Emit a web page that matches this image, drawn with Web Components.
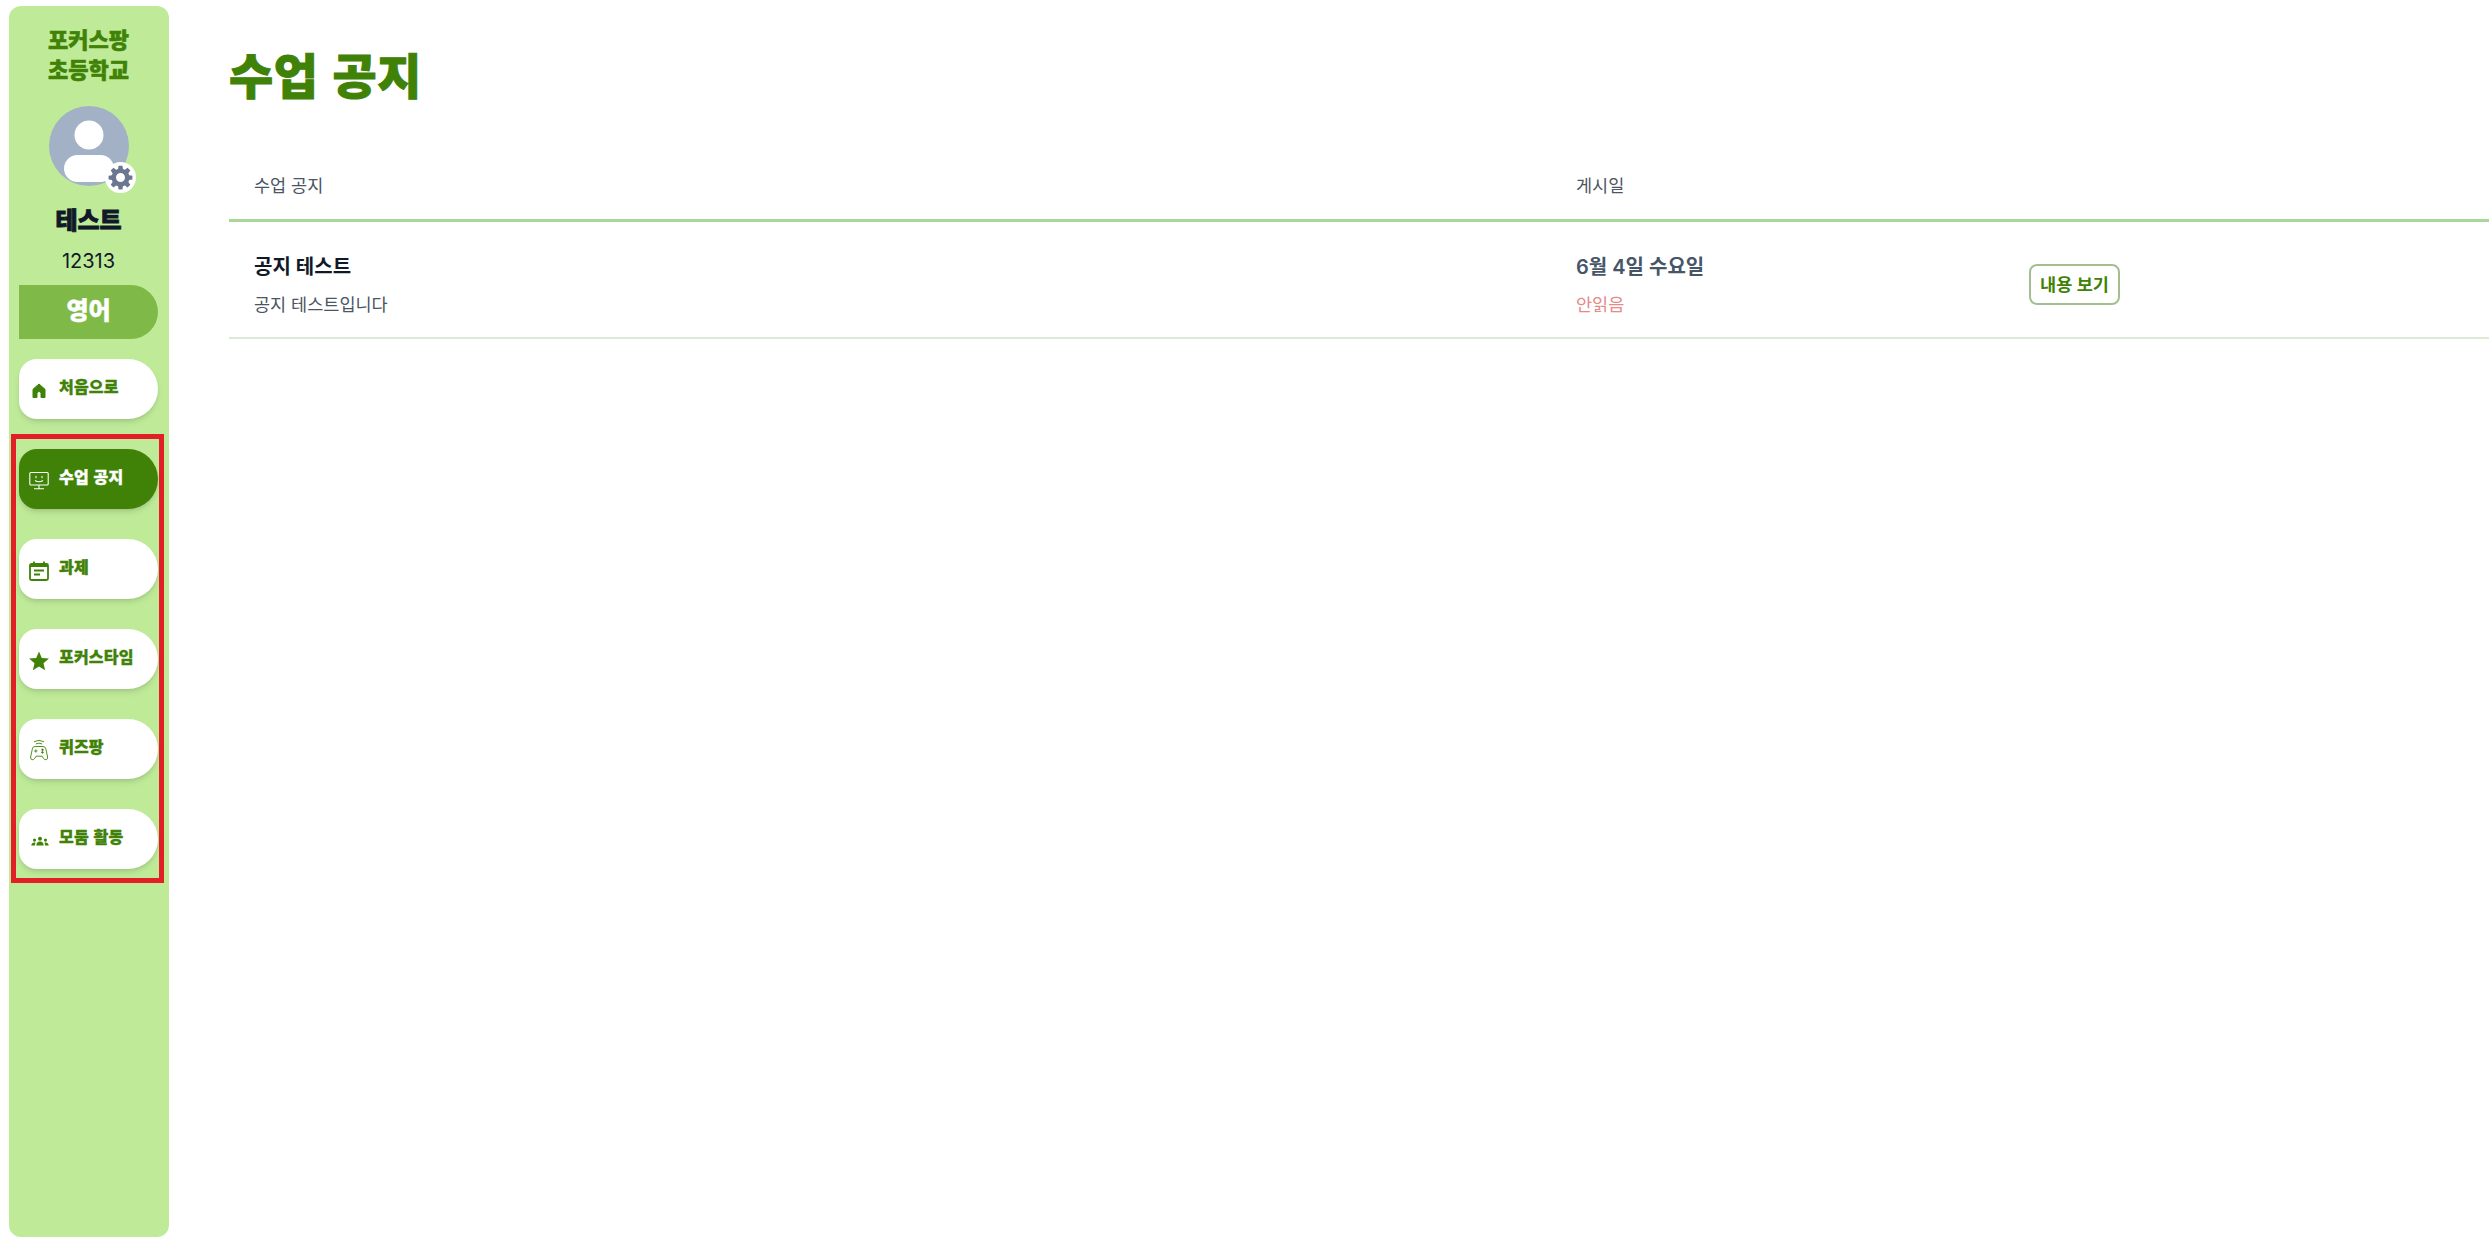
<!DOCTYPE html>
<html lang="ko">
<head>
<meta charset="utf-8">
<title>수업 공지</title>
<style>
  html, body { margin: 0; height: 100%; background: #fff; }
  body { font-family: Inter, "Noto Sans CJK KR", sans-serif; }
</style>
</head>
<body>
<app-shell>
  <school-sidebar slot="side" school="포커스팡 초등학교" name="테스트" code="12313" subject="영어">
    <nav-item slot="home" label="처음으로">
      <svg slot="icon" viewBox="0 0 24 24" width="24" height="24" style="margin:-1px -2px"><path fill="#3f8207" stroke="#3f8207" stroke-width="1" stroke-linejoin="round" d="M12 5 6 10.300V18.500H10v-4a2 2 0 0 1 4 0v4h4v-8.200z"/></svg>
    </nav-item>
    <nav-item label="수업 공지" active>
      <svg slot="icon" viewBox="0 0 20 20" width="20" height="20" fill="none" stroke="currentColor" stroke-width="1.100"><rect x=".8" y="1.500" width="18.400" height="12.500" rx="1"/><path d="M10 14v3.500M5 17.800h10M6 9.500q4 2.600 8 0"/><path d="M7 5.300v1.500M13 5.300v1.500" stroke-linecap="round"/></svg>
    </nav-item>
    <nav-item label="과제">
      <svg slot="icon" viewBox="0 0 20 20" width="20" height="20" fill="none" stroke="currentColor" stroke-width="1.800"><rect x="1" y="3" width="18" height="16" rx="1.500"/><path d="M5 .5v3M15 .5v3M1 5h18M5 9.500h10M5 13.500h6"/></svg>
    </nav-item>
    <nav-item label="포커스타임">
      <svg slot="icon" viewBox="0 0 20 20" width="20" height="20"><path fill="currentColor" d="m10 .5 2.800 6.500 7.100.6-5.400 4.700 1.600 7L10 15.600l-6.100 3.700 1.600-7L.1 7.600 7.200 7z"/></svg>
    </nav-item>
    <nav-item label="퀴즈팡">
      <svg slot="icon" viewBox="0 0 20 22" width="20" height="22" fill="none" stroke="currentColor" stroke-width=".9" style="margin-top:-2px"><path d="M5 2.800q5-3 10 0M6.800 5q3.200-1.800 6.400 0"/><path d="M6 7.500h8q2.300 0 2.800 2.300l1.800 8.200q.3 2.300-1.500 2.700-1.500.3-2.500-1.200l-1.500-2.300H7.100l-1.500 2.300q-1 1.500-2.500 1.200-1.800-.4-1.500-2.700l1.800-8.200Q3.700 7.500 6 7.500z"/><path d="M5.200 12h3.200M6.800 10.400v3.200"/><circle cx="13.500" cy="10.800" r=".8" fill="currentColor"/><circle cx="13.500" cy="13.400" r=".8" fill="currentColor"/></svg>
    </nav-item>
    <nav-item label="모둠 활동">
      <svg slot="icon" viewBox="0 0 24 24" width="22" height="22" fill="#3f8207"><circle cx="12" cy="9.500" r="2.200"/><circle cx="6" cy="11" r="1.700"/><circle cx="18" cy="11" r="1.700"/><path d="M8 17c0-3 1.600-4.500 4-4.500s4 1.500 4 4.500zM2.500 17c0-2 1.200-3.500 3.200-3.500.6 0 1.100.1 1.500.4C6.700 14.800 6.500 15.800 6.500 17zM21.500 17c0-2-1.200-3.500-3.200-3.500-.6 0-1.100.1-1.500.4.500.9.700 1.900.7 3.100z"/></svg>
    </nav-item>
  </school-sidebar>
  <notice-board heading="수업 공지" col-title="수업 공지" col-date="게시일">
    <notice-row title="공지 테스트" body="공지 테스트입니다" date="6월 4일 수요일" status="안읽음" action="내용 보기"></notice-row>
  </notice-board>
</app-shell>

<script>
class AppShell extends HTMLElement {
  constructor() {
    super();
    this.attachShadow({ mode: "open" });
    this.shadowRoot.innerHTML = `
    <style>
      :host { display: flex; height: 1250px; box-sizing: border-box; padding: 6px 3px 13px 9px; gap: 60px; }
      ::slotted(notice-board) { flex: 1; min-width: 0; }
    </style>
    <slot name="side"></slot>
    <slot></slot>`;
  }
}

class SchoolSidebar extends HTMLElement {
  constructor() {
    super();
    this.attachShadow({ mode: "open" });
  }
  connectedCallback() {
    const [a, b] = this.getAttribute("school").split(" ");
    this.shadowRoot.innerHTML = `
    <style>
      :host {
        display: flex; flex-direction: column; align-items: center; flex: none;
        width: 160px; box-sizing: border-box; padding: 17px 11px 0 10px;
        background: #bfeb99; border-radius: 12px;
        font-family: "Noto Sans CJK KR", sans-serif;
      }
      .school { margin: 0; font-size: 22px; line-height: 30px; font-weight: 900; color: #3f8207; text-align: center; -webkit-text-stroke: .5px #3f8207; }
      .avatar { position: relative; width: 80px; height: 80px; margin-top: 23px; border-radius: 50%; background: #a2b1c6; }
      .avatar .person { display: block; border-radius: 50%; overflow: hidden; }
      .gear { position: absolute; right: -7px; bottom: -7px; width: 31px; height: 31px; border-radius: 50%; background: #fff; display: grid; place-items: center; }
      .name { margin-top: 13px; font-size: 24px; line-height: 40px; font-weight: 900; color: #111827; -webkit-text-stroke: .8px #111827; }
      .code { font: 400 20px/26px Inter, sans-serif; color: #111827; margin-top: 9px; }
      .subject {
        align-self: stretch; height: 54px; margin-top: 11px; padding-bottom: 8px; box-sizing: border-box; display: flex; align-items: center; justify-content: center;
        background: #7fba48; color: #fff; font-size: 24px; font-weight: 900; border-radius: 0 27px 27px 0; -webkit-text-stroke: .5px #fff;
      }
      .home { align-self: stretch; margin-top: 20px; }
      .box {
        align-self: stretch; margin: 15px -6px 0 -8px; box-sizing: border-box; padding: 10px 1px 9px 3px;
        border: 5px solid #e21f26; display: flex; flex-direction: column; gap: 30px;
      }
    </style>
    <h1 class="school">${a}<br>${b}</h1>
    <div class="avatar">
      <svg class="person" viewBox="0 0 80 80" width="80" height="80" fill="#fff"><circle cx="40" cy="29" r="14.500"/><rect x="15" y="49" width="50" height="27" rx="13.500"/></svg>
      <div class="gear">
        <svg viewBox="0 0 24 24" width="27" height="27"><path fill="#6b7690" fill-rule="evenodd" d="M10.300 1.500h3.400l.5 2.900 1.700.7 2.400-1.700 2.400 2.400-1.700 2.400.7 1.700 2.900.5v3.400l-2.900.5-.7 1.700 1.700 2.400-2.400 2.400-2.400-1.700-1.700.7-.5 2.900h-3.400l-.5-2.900-1.700-.7-2.400 1.700-2.400-2.400 1.700-2.400-.7-1.700-2.900-.5v-3.400l2.900-.5.7-1.700-1.700-2.400 2.400-2.400 2.400 1.700 1.700-.7zM12 8a4 4 0 1 0 0 8 4 4 0 0 0 0-8z"/></svg>
      </div>
    </div>
    <div class="name">${this.getAttribute("name")}</div>
    <div class="code">${this.getAttribute("code")}</div>
    <div class="subject">${this.getAttribute("subject")}</div>
    <div class="home"><slot name="home"></slot></div>
    <div class="box"><slot></slot></div>`;
  }
}

class NavItem extends HTMLElement {
  constructor() {
    super();
    this.attachShadow({ mode: "open" });
  }
  connectedCallback() {
    this.shadowRoot.innerHTML = `
    <style>
      :host {
        display: flex; align-items: center; height: 60px; box-sizing: border-box; padding-left: 10px; gap: 10px;
        background: #fff; color: #3f8207; border-radius: 18px 30px 30px 18px;
        box-shadow: 0 4px 6px -1px rgba(0,0,0,.12), 0 2px 4px -2px rgba(0,0,0,.1);
        cursor: pointer;
      }
      :host([active]) { background: #3f8207; color: #fff; }
      .icon { width: 20px; height: 22px; margin-top: 3px; display: grid; place-items: center; flex: none; }
      .label { font: 900 16px/24px "Noto Sans CJK KR", sans-serif; margin-top: -6px; letter-spacing: .2px; white-space: nowrap; -webkit-text-stroke: .35px currentColor; }
    </style>
    <span class="icon"><slot name="icon"></slot></span>
    <span class="label">${this.getAttribute("label")}</span>`;
  }
}

class NoticeBoard extends HTMLElement {
  constructor() {
    super();
    this.attachShadow({ mode: "open" });
  }
  connectedCallback() {
    this.shadowRoot.innerHTML = `
    <style>
      :host { display: block; font-family: Inter, "Noto Sans CJK KR", sans-serif; }
      h2 { margin: 31px 0 0; font: 900 48px/72px "Noto Sans CJK KR", sans-serif; color: #3f8207; letter-spacing: .6px; -webkit-text-stroke: 1px #3f8207; }
      .head {
        display: grid; grid-template-columns: 1322px 453px 1fr; margin-top: 41px; height: 72px; align-items: center;
        border-bottom: 3px solid #a9d89a; box-sizing: border-box; padding-left: 25px;
        font-size: 17.500px; color: #4b5563;
      }
    </style>
    <h2>${this.getAttribute("heading")}</h2>
    <div class="head">
      <span>${this.getAttribute("col-title")}</span>
      <span>${this.getAttribute("col-date")}</span>
      <span></span>
    </div>
    <slot></slot>`;
  }
}

class NoticeRow extends HTMLElement {
  constructor() {
    super();
    this.attachShadow({ mode: "open" });
  }
  connectedCallback() {
    this.shadowRoot.innerHTML = `
    <style>
      :host {
        display: grid; grid-template-columns: 1322px 453px 1fr; align-items: center; height: 117px; box-sizing: border-box;
        padding: 10px 0 0 25px; border-bottom: 2px solid #dce9d4; font-family: Inter, "Noto Sans CJK KR", sans-serif;
      }
      .main { font-size: 20px; line-height: 30px; font-weight: 600; }
      .sub { font-size: 17.500px; line-height: 26px; margin-top: 10px; }
      .title { color: #111827; }
      .body { color: #4b5563; }
      .date { color: #475569; }
      .status { color: #e58a8a; }
      button {
        display: block; width: 91px; height: 41px; padding: 0; background: #fff; border: 2px solid #a3bf92; border-radius: 8px;
        color: #3f8207; font: 600 17.500px/1 Inter, "Noto Sans CJK KR", sans-serif; cursor: pointer;
      }
    </style>
    <div>
      <div class="main title">${this.getAttribute("title")}</div>
      <div class="sub body">${this.getAttribute("body")}</div>
    </div>
    <div>
      <div class="main date">${this.getAttribute("date")}</div>
      <div class="sub status">${this.getAttribute("status")}</div>
    </div>
    <div><button>${this.getAttribute("action")}</button></div>`;
  }
}

customElements.define("app-shell", AppShell);
customElements.define("school-sidebar", SchoolSidebar);
customElements.define("nav-item", NavItem);
customElements.define("notice-board", NoticeBoard);
customElements.define("notice-row", NoticeRow);
</script>
</body>
</html>
